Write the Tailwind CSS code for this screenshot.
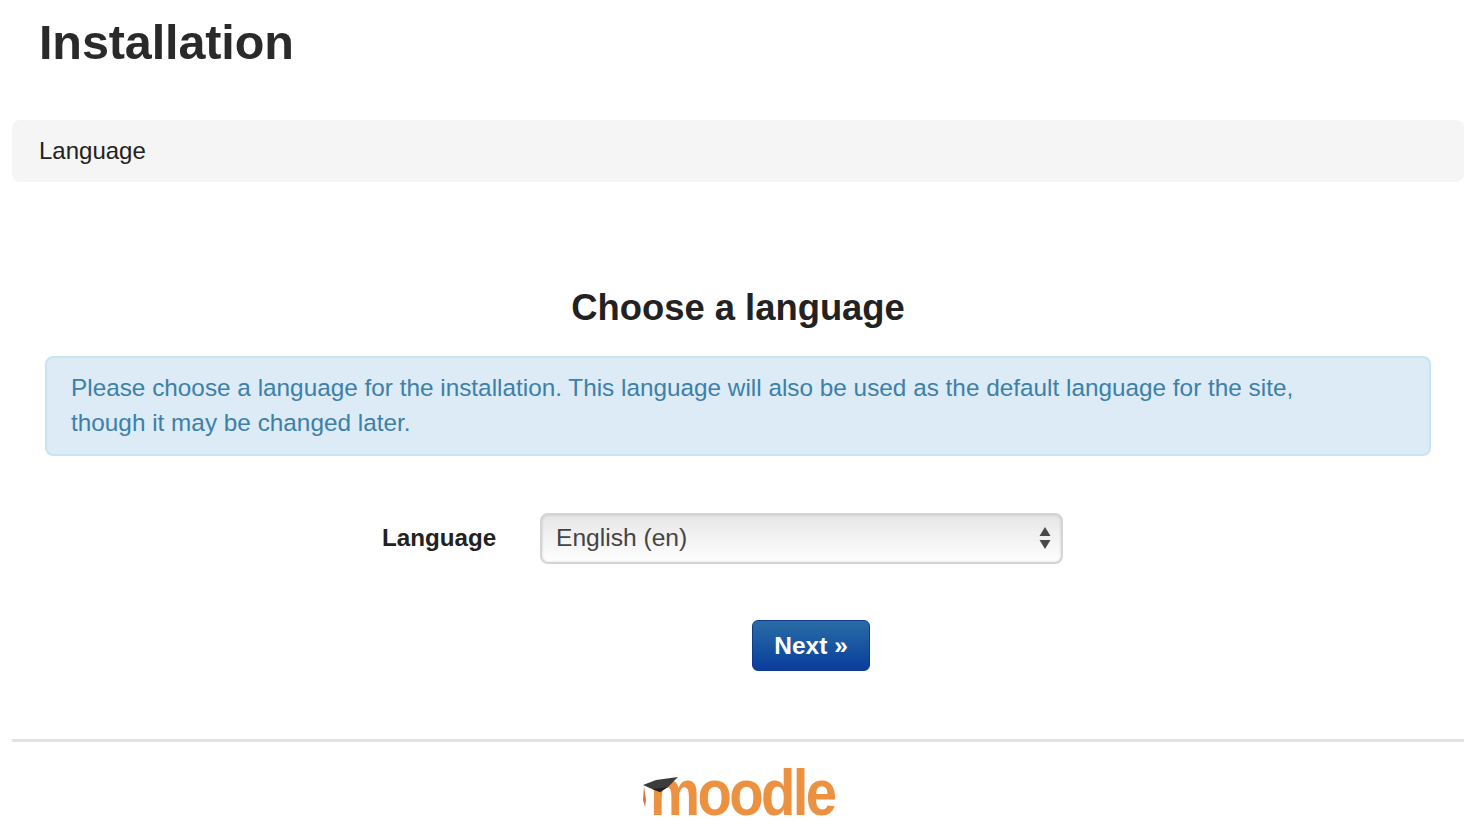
<!DOCTYPE html>
<html lang="en">
<head>
  <meta charset="UTF-8" />
  <title>Installation</title>
  <script src="https://cdn.jsdelivr.net/npm/@tailwindcss/browser@4"></script>
</head>
<body class="bg-white text-[#222] font-['Liberation_Sans',Arial,sans-serif] h-[839px] overflow-hidden">
  <div class="pl-3 pr-4">
    <h1 class="pt-[13px] pl-[27px] text-[48.500px] leading-[58px] font-bold tracking-[-0.1px] text-[#2a2a2a]">Installation</h1>
    <div class="mt-[49px] h-[62px] bg-[#f5f5f5] rounded-lg pl-[27px] flex items-center text-[24px] text-[#222]">Language</div>

    <h2 class="mt-[104px] text-center text-[36.400px] leading-[44px] font-bold text-[#222]">Choose a language</h2>

    <div class="mt-[26px] mx-[33px] h-[100px] bg-[#dcebf5] border-2 border-[#c8e4f0] rounded-lg pl-6 pr-[100px] pt-[13px] text-[24.340px] leading-[34.500px] text-[#3d80a8]">
      Please choose a language for the installation. This language will also be used as the default language for the site, though it may be changed later.
    </div>

    <form>
      <div class="mt-[57px] flex items-center">
        <label class="ml-[370px] w-[158px] text-[24.200px] font-bold text-[#222]">Language</label>
        <div class="relative w-[523px] h-[51px] rounded-lg border-2 border-[#d4d4d4] bg-gradient-to-b from-[#e6e6e6] to-white shadow-[inset_0_0_3px_rgba(0,0,0,0.15)] flex items-center pl-[14px] text-[24.600px] text-[#444]">
          English (en)
          <svg class="absolute right-[10px] top-[11px]" width="12" height="24" viewBox="0 0 12 24"><path d="M6 1 L11.500 10 L0.500 10 Z M0.500 14 L11.500 14 L6 23 Z" fill="#4a4a4a"/></svg>
        </div>
      </div>
      <div class="mt-[56px] pl-[740px]">
        <button type="button" class="w-[118px] h-[51px] pt-[1px] rounded-md border border-[#0d3a8a] bg-gradient-to-b from-[#2a6ca6] to-[#0d3c9c] text-white text-[24.500px] font-bold">Next »</button>
      </div>
    </form>

    <div class="mt-[68px] h-[3px] bg-[#e3e3e3]"></div>

    <div class="mt-[11px] flex justify-center">
      <div class="relative w-[194px] h-[72px] ml-[2px]">
        <span class="absolute left-[8px] top-0 origin-left scale-x-[0.88] text-[64px] leading-[80px] font-bold tracking-[-3px] text-[#ec9140]">moodle</span>
        <svg class="absolute left-0 top-[12px]" width="40" height="45" viewBox="0 0 40 45">
          <path d="M1 20 L14 15 L36 12 L26 22 L18 27 L10 24 Z" fill="#3c3c3c"/>
          <path d="M10 24 L26 22 L18 27 Z" fill="#222"/>
          <path d="M2 21 L1 35 L3 42 L4 35 Z" fill="#e0703a"/>
        </svg>
      </div>
    </div>
  </div>
</body>
</html>
